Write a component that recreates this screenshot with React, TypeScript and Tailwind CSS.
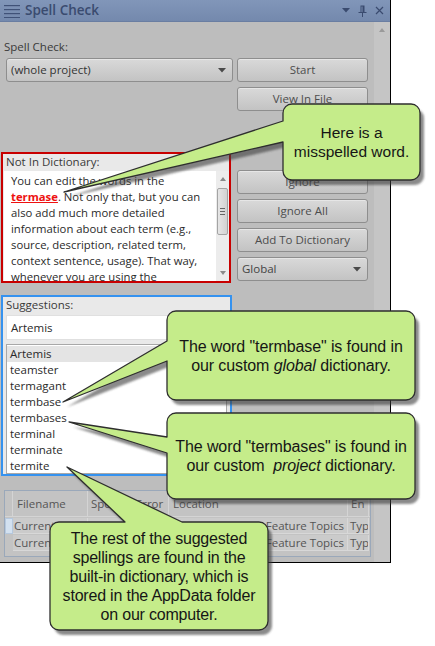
import React from "react";

type Ptr = { side: "left" | "top"; a: number; b: number; ax: number; ay: number };

function calloutPath(x: number, y: number, w: number, h: number, r: number, p: Ptr) {
  const R = `A ${r} ${r} 0 0 1`;
  if (p.side === "left") {
    return `M ${x + r} ${y} H ${x + w - r} ${R} ${x + w} ${y + r} V ${y + h - r} ${R} ${x + w - r} ${y + h} H ${x + r} ${R} ${x} ${y + h - r} V ${p.b} L ${p.ax} ${p.ay} L ${x} ${p.a} V ${y + r} ${R} ${x + r} ${y} Z`;
  }
  return `M ${x + r} ${y} H ${p.a} L ${p.ax} ${p.ay} L ${p.b} ${y} H ${x + w - r} ${R} ${x + w} ${y + r} V ${y + h - r} ${R} ${x + w - r} ${y + h} H ${x + r} ${R} ${x} ${y + h - r} V ${y + r} ${R} ${x + r} ${y} Z`;
}

const callouts = [
  { x: 283, y: 104, w: 137, h: 76, p: { side: "left", a: 121, b: 142, ax: 64, ay: 192 } as Ptr },
  { x: 167, y: 311, w: 248, h: 89, p: { side: "left", a: 341, b: 361, ax: 63, ay: 402 } as Ptr },
  { x: 167, y: 413, w: 248, h: 86, p: { side: "left", a: 437, b: 453, ax: 69, ay: 422 } as Ptr },
  { x: 50, y: 522, w: 218, h: 108, p: { side: "top", a: 125, b: 182, ax: 67, ay: 467 } as Ptr },
];

function Btn({ label }: { label: string }) {
  return (
    <div className="h-[24px] w-[131px] rounded-[3px] border border-[#8e8e8e] bg-linear-to-b from-[#d9d9d9] via-[#cecece] to-[#c3c3c3] flex items-center justify-center text-[11.5px] text-[#4d4d4d] shadow-[inset_0_1px_0_#e6e6e6]">
      {label}
    </div>
  );
}

function Arrow({ className = "" }: { className?: string }) {
  return (
    <svg width="8" height="5" viewBox="0 0 8 5" className={className}>
      <path d="M0 0 H8 L4 4.5 Z" fill="#4a4a4a" />
    </svg>
  );
}

const suggestions = ["Artemis", "teamster", "termagant", "termbase", "termbases", "terminal", "terminate", "termite"];

export default function App() {
  return (
    <div className="relative w-[435px] h-[646px] bg-white overflow-hidden font-['Open_Sans',sans-serif]">
      {/* window */}
      <div className="w-[391px] h-[563px] border-r border-b border-black bg-[#bdbdbd] flex flex-col">
        {/* title bar */}
        <div className="h-[22px] bg-linear-to-b from-[#8196b9] to-[#7489ad] flex items-center pl-[4px] pr-[6px] border-b border-[#6a7ea2]">
          <svg width="16" height="14" viewBox="0 0 16 14" className="mr-[5px]">
            <rect x="0" y="1" width="16" height="1.2" fill="#405278" />
            <rect x="0" y="5" width="16" height="1.2" fill="#405278" />
            <rect x="0" y="9" width="16" height="1.2" fill="#405278" />
            <rect x="0" y="13" width="16" height="1" fill="#405278" />
          </svg>
          <span className="text-[13.5px] font-semibold text-[#3a4b6f] leading-none">Spell Check</span>
          <div className="ml-auto flex items-center gap-[8px]">
            <svg width="8" height="5" viewBox="0 0 8 5">
              <path d="M0 0 H8 L4 4.5 Z" fill="#3a4b6f" />
            </svg>
            <svg width="9" height="12" viewBox="0 0 9 12">
              <path d="M2.5 0.5 H6.5 V7 H8.5 V8 H0.5 V7 H2.5 Z M3.5 1.5 V7 H4.5 V1.5 Z" fill="#3a4b6f" fillRule="evenodd" />
              <rect x="4" y="8" width="1" height="4" fill="#3a4b6f" />
            </svg>
            <svg width="9" height="9" viewBox="0 0 9 9">
              <path d="M1 1 L8 8 M8 1 L1 8" stroke="#3a4b6f" strokeWidth="1.2" />
            </svg>
          </div>
        </div>

        <div className="flex flex-1 min-h-0">
          {/* main content */}
          <div className="w-[374px] flex flex-col text-[11.5px] text-[#333]">
            <div className="pt-[17px] pl-[4px] leading-[16px] text-[#3a3a3a]">Spell Check:</div>
            <div className="mt-[3px] flex gap-[4px] pl-[6px]">
              <div className="h-[24px] w-[227px] rounded-[3px] border border-[#8e8e8e] bg-linear-to-b from-[#d9d9d9] via-[#cecece] to-[#c3c3c3] flex items-center pl-[4px] pr-[6px] shadow-[inset_0_1px_0_#e6e6e6]">
                <span className="text-[#333]">(whole project)</span>
                <Arrow className="ml-auto" />
              </div>
              <Btn label="Start" />
            </div>
            <div className="mt-[5px] pl-[237px]">
              <Btn label="View In File" />
            </div>

            <div className="mt-[41px] flex">
              <div className="ml-[1px] w-[230px] h-[131px] border-2 border-[#c80000] flex flex-col bg-[#e9e9e9]">
                <div className="h-[17px] pl-[3px] leading-[16px] text-[#3a3a3a]">Not In Dictionary:</div>
                <div className="flex-1 min-h-0 bg-white flex ml-[1px] overflow-hidden">
                  <div className="flex-1 pl-[7px] pt-[2px] text-[11.3px] leading-[16px] text-[#2a2a2a] overflow-hidden">
                    You can edit the words in the
                    <br />
                    <span className="text-[#ee1111] font-bold underline">termase</span>. Not only that, but you can
                    <br />
                    also add much more detailed
                    <br />
                    information about each term (e.g.,
                    <br />
                    source, description, related term,
                    <br />
                    context sentence, usage). That way,
                    <br />
                    whenever you are using the
                  </div>
                  <div className="w-[13px] bg-[#ececec] flex flex-col items-center pt-[6px] pb-[6px]">
                    <svg width="6" height="4" viewBox="0 0 6 4">
                      <path d="M0 4 L3 0 L6 4 Z" fill="#8a8a8a" />
                    </svg>
                    <div className="mt-[7px] w-[11px] h-[47px] rounded-[2px] border border-[#a4a4a4] bg-linear-to-r from-[#e6e6e6] to-[#d2d2d2] flex flex-col items-center justify-center gap-[2px]">
                      <div className="w-[5px] h-px bg-[#666]" />
                      <div className="w-[5px] h-px bg-[#666]" />
                      <div className="w-[5px] h-px bg-[#666]" />
                    </div>
                    <svg width="6" height="4" viewBox="0 0 6 4" className="mt-auto">
                      <path d="M0 0 L3 4 L6 0 Z" fill="#8a8a8a" />
                    </svg>
                  </div>
                </div>
              </div>
              <div className="ml-[6px] pt-[18px] flex flex-col gap-[5px]">
                <Btn label="Ignore" />
                <Btn label="Ignore All" />
                <Btn label="Add To Dictionary" />
                <div className="h-[24px] w-[131px] rounded-[3px] border border-[#8e8e8e] bg-linear-to-b from-[#d9d9d9] via-[#cecece] to-[#c3c3c3] flex items-center pl-[4px] pr-[6px] shadow-[inset_0_1px_0_#e6e6e6]">
                  <span className="text-[#444]">Global</span>
                  <Arrow className="ml-auto" />
                </div>
              </div>
            </div>

            <div className="mt-[12px] ml-[1px] w-[231px] h-[181px] border-2 border-[#3592ef] bg-[#e9e9e9] flex flex-col">
              <div className="h-[17px] pl-[3px] leading-[16px] text-[#3a3a3a]">Suggestions:</div>
              <div className="mt-[1px] mx-[3px] h-[25px] bg-white border border-[#e0e0e0] flex items-center pl-[4px] text-[#2a2a2a]">
                Artemis
              </div>
              <div className="mt-[4px] mx-[3px] flex-1 min-h-0 bg-white border border-[#a8a8a8] pt-px overflow-hidden">
                {suggestions.map((s, i) => (
                  <div
                    key={s}
                    className={
                      i === 0
                        ? "h-[16px] leading-[16px] pl-[3px] bg-[#e4e4e4] text-[#2a2a2a]"
                        : "h-[16px] leading-[16px] pl-[3px] text-[#2a2a2a]"
                    }
                  >
                    {s}
                  </div>
                ))}
              </div>
            </div>

            <div className="mt-[14px] ml-[4px] w-[367px] h-[67px] border border-[#9aa8ba] bg-[#c3c3c3] flex flex-col text-[#555]">
              <div className="flex h-[26px] border-b border-[#d4d4d4]">
                <div className="w-[8px] border-r border-[#d4d4d4]" />
                <div className="w-[75px] border-r border-[#d4d4d4] pl-[4px] flex items-center">Filename</div>
                <div className="w-[81px] border-r border-[#d4d4d4] pl-[3px] flex items-center whitespace-nowrap overflow-hidden">Spelling Error</div>
                <div className="w-[179px] border-r border-[#d4d4d4] pl-[4px] flex items-center">Location</div>
                <div className="w-[21px] border-r border-[#d4d4d4] pl-[3px] flex items-center overflow-hidden">En</div>
              </div>
              {[0, 1].map((r) => (
                <div key={r} className="flex h-[16px] mt-px">
                  <div className={r === 0 ? "w-[8px] bg-[#d3e1f0] border border-[#b5c8de]" : "w-[8px]"} />
                  <div className="w-[75px] border-r border-b border-[#d8d8d8] bg-[#cbcbcb] pl-[1px] leading-[15px] whitespace-nowrap overflow-hidden">CurrentTopic.htm</div>
                  <div className="w-[81px] border-r border-b border-[#d8d8d8] bg-[#cbcbcb] pl-[3px] leading-[15px] whitespace-nowrap overflow-hidden">termase</div>
                  <div className="w-[179px] border-r border-b border-[#d8d8d8] bg-[#cbcbcb] pr-[3px] leading-[15px] whitespace-nowrap overflow-hidden flex justify-end">Feature Topics</div>
                  <div className="w-[21px] border-r border-b border-[#d8d8d8] bg-[#cbcbcb] pl-[2px] leading-[15px] whitespace-nowrap overflow-hidden">Type</div>
                </div>
              ))}
            </div>
          </div>
          {/* window scrollbar */}
          <div className="w-[16px] bg-[#c5c5c5] flex flex-col items-center pt-[6px]">
            <svg width="6" height="4" viewBox="0 0 6 4">
              <path d="M0 4 L3 0 L6 4 Z" fill="#9a9a9a" />
            </svg>
          </div>
        </div>
      </div>

      {/* callouts */}
      <svg className="absolute left-0 top-0" width="435" height="646" viewBox="0 0 435 646">
        <defs>
          <filter id="sh" x="-10%" y="-10%" width="130%" height="130%">
            <feGaussianBlur stdDeviation="1.2" />
          </filter>
        </defs>
        {callouts.map((c, i) => (
          <g key={i}>
            <path d={calloutPath(c.x, c.y, c.w, c.h, 9, c.p)} transform="translate(4,5)" fill="#3c3c3c" opacity="0.6" filter="url(#sh)" />
            <path d={calloutPath(c.x, c.y, c.w, c.h, 9, c.p)} fill="#c5ec8a" stroke="#2e2e2e" strokeWidth="1.3" strokeLinejoin="round" />
          </g>
        ))}
      </svg>

      <div className="absolute left-[283px] top-[104px] w-[137px] h-[76px] flex items-center justify-center text-center font-['Liberation_Sans',Arial,sans-serif] text-[15.5px] leading-[19px] text-[#161616]">
        <div>
          Here is a
          <br />
          misspelled word.
        </div>
      </div>
      <div className="absolute left-[167px] top-[311px] w-[248px] h-[89px] flex items-center justify-center text-center font-['Liberation_Sans',Arial,sans-serif] text-[16px] leading-[19px] tracking-[-0.1px] text-[#161616]">
        <div>
          The word "termbase" is found in
          <br />
          our custom <i>global</i> dictionary.
        </div>
      </div>
      <div className="absolute left-[167px] top-[413px] w-[248px] h-[86px] flex items-center justify-center text-center font-['Liberation_Sans',Arial,sans-serif] text-[16px] leading-[19px] tracking-[-0.1px] text-[#161616]">
        <div>
          The word "termbases" is found in
          <br />
          our custom&nbsp; <i>project</i> dictionary.
        </div>
      </div>
      <div className="absolute left-[50px] top-[522px] w-[218px] h-[108px] flex items-center justify-center text-center font-['Liberation_Sans',Arial,sans-serif] text-[16px] leading-[19px] tracking-[-0.2px] text-[#161616]">
        <div>
          The rest of the suggested
          <br />
          spellings are found in the
          <br />
          built-in dictionary, which is
          <br />
          stored in the AppData folder
          <br />
          on our computer.
        </div>
      </div>
    </div>
  );
}
